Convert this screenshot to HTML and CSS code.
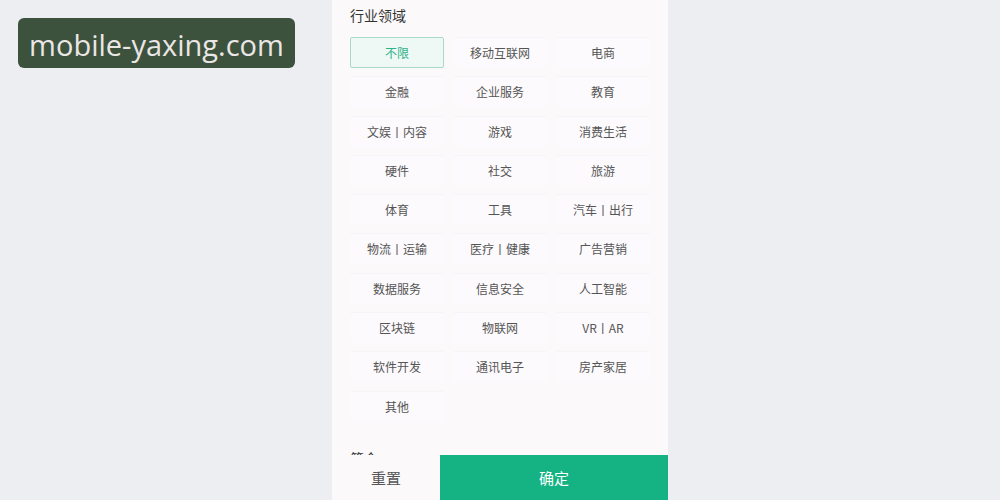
FILE: index.html
```html
<!DOCTYPE html>
<html lang="zh-CN">
<head>
    <meta charset="UTF-8">
    <meta name="viewport" content="width=device-width, initial-scale=1.0">
    <link rel="stylesheet" href="styles.css">
</head>
<body>
    <div class="watermark">mobile-yaxing.com</div>
    <div class="page">
        <div class="panel">
            <h2 class="section-title">行业领域</h2>
            <div class="tags">
                <span class="tag active">不限</span>
                <span class="tag">移动互联网</span>
                <span class="tag">电商</span>
                <span class="tag">金融</span>
                <span class="tag">企业服务</span>
                <span class="tag">教育</span>
                <span class="tag">文娱丨内容</span>
                <span class="tag">游戏</span>
                <span class="tag">消费生活</span>
                <span class="tag">硬件</span>
                <span class="tag">社交</span>
                <span class="tag">旅游</span>
                <span class="tag">体育</span>
                <span class="tag">工具</span>
                <span class="tag">汽车丨出行</span>
                <span class="tag">物流丨运输</span>
                <span class="tag">医疗丨健康</span>
                <span class="tag">广告营销</span>
                <span class="tag">数据服务</span>
                <span class="tag">信息安全</span>
                <span class="tag">人工智能</span>
                <span class="tag">区块链</span>
                <span class="tag">物联网</span>
                <span class="tag">VR丨AR</span>
                <span class="tag">软件开发</span>
                <span class="tag">通讯电子</span>
                <span class="tag">房产家居</span>
                <span class="tag">其他</span>
            </div>
            <h2 class="section-title next">简介</h2>
            <div class="actions">
                <button class="btn reset">重置</button>
                <button class="btn confirm">确定</button>
            </div>
        </div>
    </div>
</body>
</html>
```

FILE: styles.css
```css
body {
    margin: 0;
    padding: 0;
    background-color: #edeef2;
    font-family: "Noto Sans CJK SC", "Noto Sans", sans-serif;
    height: 500px;
    overflow: hidden;
}
.watermark {
    position: absolute;
    top: 18px;
    left: 18px;
    width: 277px;
    height: 50px;
    box-sizing: border-box;
    background-color: #3d523d;
    border-radius: 6px;
    color: #ebe6e6;
    font-family: "Open Sans", "Noto Sans", sans-serif;
    font-size: 29px;
    line-height: 54px;
    text-align: center;
    z-index: 10;
}
.page {
    display: flex;
    justify-content: center;
    height: 500px;
}
.panel {
    position: relative;
    width: 336px;
    height: 500px;
    background-color: #fcf9fb;
    padding: 0 18px;
    box-sizing: border-box;
    overflow: hidden;
}
.section-title {
    margin: 0;
    padding-top: 5px;
    height: 37px;
    box-sizing: border-box;
    font-size: 14px;
    font-weight: normal;
    line-height: 20px;
    color: #333;
}
.section-title.next {
    margin-top: 21px;
}
.tags {
    display: grid;
    grid-template-columns: repeat(3, 94px);
    grid-auto-rows: 31px;
    column-gap: 9px;
    row-gap: 8.3px;
}
.tag {
    display: flex;
    align-items: center;
    justify-content: center;
    font-size: 12px;
    color: #555;
    background-color: #fcfafc;
    border: 1px solid transparent;
    border-top-color: #f6f4f6;
    border-radius: 2px;
}
.tag.active {
    color: #2db38a;
    background-color: #eef8f4;
    border: 1px solid #a8dac6;
}
.actions {
    position: absolute;
    left: 0;
    right: 0;
    bottom: 0;
    height: 45px;
    display: flex;
}
.btn {
    border: none;
    margin: 0;
    padding: 0;
    font-family: "Noto Sans CJK SC", "Noto Sans", sans-serif;
    font-size: 15px;
}
.btn.reset {
    width: 108px;
    background-color: #fcf9fb;
    color: #555;
}
.btn.confirm {
    flex: 1;
    background-color: #15b383;
    color: #fff;
}
```
